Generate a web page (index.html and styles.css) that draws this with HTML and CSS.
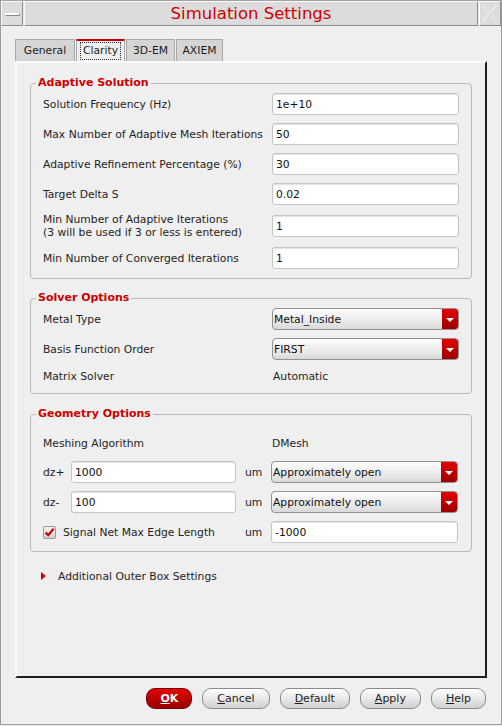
FILE: index.html
```html
<!doctype html>
<html lang="en">
<head>
	<meta charset="utf-8">
	<title>Simulation Settings</title>
	<link rel="stylesheet" href="styles.css">
</head>

<body>
	<div id='window'>
		<div id='titlebar'>
			<div class='tb-btn'><span class='min-bar'></span></div>
			<div id='tb-title'>Simulation Settings</div>
			<div class='tb-btn'>
				<svg width="16" height="18" viewBox="0 0 16 18">
					<path d="M1 1 L15 17 M15 1 L1 17" stroke="#fbfbfb" stroke-width="2"/>
					<path d="M1.5 1.5 L15 17 M15 1.5 L1.5 17" stroke="#c4c4c4" stroke-width="1"/>
				</svg>
			</div>
		</div>

		<div id='tabs'>
			<div class='tab'>General</div>
			<div class='tab active'><span class='focus'>Clarity</span></div>
			<div class='tab'>3D-EM</div>
			<div class='tab'>AXIEM</div>
		</div>

		<div id='panel'>
			<fieldset>
				<legend>Adaptive Solution</legend>
				<div class='rows two-col'>
					<label>Solution Frequency (Hz)</label>
					<input type="text" value="1e+10">
					<label>Max Number of Adaptive Mesh Iterations</label>
					<input type="text" value="50">
					<label>Adaptive Refinement Percentage (%)</label>
					<input type="text" value="30">
					<label>Target Delta S</label>
					<input type="text" value="0.02">
					<label class='two-line'>Min Number of Adaptive Iterations<br>(3 will be used if 3 or less is entered)</label>
					<input type="text" value="1">
					<label>Min Number of Converged Iterations</label>
					<input type="text" value="1">
				</div>
			</fieldset>

			<fieldset>
				<legend>Solver Options</legend>
				<div class='rows two-col'>
					<label>Metal Type</label>
					<div class='combo'><span>Metal_Inside</span><i></i></div>
					<label>Basis Function Order</label>
					<div class='combo'><span>FIRST</span><i></i></div>
					<label class='short'>Matrix Solver</label>
					<div class='short value'>Automatic</div>
				</div>
			</fieldset>

			<fieldset>
				<legend>Geometry Options</legend>
				<div class='rows geo'>
					<label class='wide'>Meshing Algorithm</label>
					<div class='value'>DMesh</div>
					<label>dz+</label>
					<input type="text" value="1000">
					<span class='unit'>um</span>
					<div class='combo'><span>Approximately open</span><i></i></div>
					<label>dz-</label>
					<input type="text" value="100">
					<span class='unit'>um</span>
					<div class='combo'><span>Approximately open</span><i></i></div>
					<label class='check'>
						<svg width="13" height="13" viewBox="0 0 13 13">
							<defs>
								<linearGradient id="cb" x1="0" y1="0" x2="0" y2="1">
									<stop offset="0" stop-color="#f4f4f4"/>
									<stop offset="1" stop-color="#cfcfcf"/>
								</linearGradient>
							</defs>
							<rect x="0.5" y="0.5" width="12" height="12" rx="1.5" fill="url(#cb)" stroke="#9a9a9a"/>
							<path d="M2.6 6.4 L5.2 9.2 L10.6 2.8" fill="none" stroke="#cc0000" stroke-width="2.2"/>
						</svg>
						Signal Net Max Edge Length
					</label>
					<span class='unit'>um</span>
					<input type="text" value="-1000">
				</div>
			</fieldset>

			<div id='outer-box'><span class='arrow'></span>Additional Outer Box Settings</div>
		</div>

		<div id='buttons'>
			<button class='ok'><u>O</u>K</button>
			<button><u>C</u>ancel</button>
			<button><u>D</u>efault</button>
			<button><u>A</u>pply</button>
			<button><u>H</u>elp</button>
		</div>
	</div>
</body>
</html>
```
FILE: styles.css
```css
*{ margin: 0px; padding: 0px; box-sizing: border-box; }
body{
	width: 502px; height: 726px; overflow: hidden;
	background-color: #efefef; color: #1e1e1e;
	font: 10.75px "DejaVu Sans", sans-serif; }

#window{
	height: 725px; display: flex; flex-direction: column;
	border-left: 1px solid #9c9c9c; border-right: 1px solid #9c9c9c;
	border-bottom: 1px solid #9c9c9c; }

/* title bar */
#titlebar{
	display: flex; gap: 1px; height: 26px;
	border-top: 1px solid #a2a2a2; background-color: #ececec; }
.tb-btn, #tb-title{
	background-color: #dcdcdc;
	border: 1px solid; border-color: #fafafa #8e8e8e #8e8e8e #fafafa; }
.tb-btn{
	width: 22px; display: flex; align-items: center; justify-content: center; }
.min-bar{
	width: 15px; height: 3px; margin-top: 2px;
	background-color: #fbfbfb; border: 1px solid; border-color: #fff #8a8a8a #8a8a8a #fff; }
#tb-title{
	flex: 1; text-align: center; color: #cc0000;
	font-size: 16.5px; line-height: 23px; }

/* tabs */
#tabs{
	display: flex; gap: 1px; margin: 13px 0 0 14px; height: 22px; }
.tab{
	height: 22px; padding-top: 4px; text-align: center;
	background-color: #d5d5d5; border: 1px solid #a9a9a9; border-bottom: none; }
.tab:nth-child(1){ width: 60px; }
.tab:nth-child(2){ width: 49px; }
.tab:nth-child(3){ width: 49px; }
.tab:nth-child(4){ width: 47px; }
.tab.active{
	background-color: #efefef; border-top: 2px solid #cc0000; padding-top: 1px; }
.focus{
	display: inline-block; padding: 1px 2px 2px 2px; border: 1px dotted #333; }

#panel{
	width: 472px; height: 617px; margin-left: 14px; padding: 13px 13px 0 13px;
	border: 2px solid; border-color: #fcfcfc #1e1e1e #1e1e1e #fcfcfc; }

/* group boxes */
fieldset{
	width: 442px; border: 1px solid #bababa; border-radius: 4px; }
fieldset + fieldset{ margin-top: 12px; }
fieldset:last-of-type{ margin-top: 13px; }
legend{
	margin-left: 5px; padding: 0 2px; line-height: 14px;
	color: #cc0000; font-weight: bold; font-size: 11px; }

.rows{
	display: grid; row-gap: 8px; padding: 3px 12px 9px 12px;
	align-items: center; }
.two-col{ grid-template-columns: 1fr 187px; }
.two-col .two-line{ line-height: 13px; }
.two-col > *{ min-height: 22px; display: flex; align-items: center; }
.two-col > .short{ min-height: 16px; height: 16px; }
.value{ padding-left: 1px; }

.geo{
	grid-template-columns: 28px 165px 35px 187px;
	grid-template-rows: 20px 22px 22px 22px;
	padding: 12px 12px 8px 12px; }
.geo .wide{ grid-column: span 3; }
.geo .check{ grid-column: span 2; display: flex; align-items: center; gap: 7px; }
.unit{ padding-left: 9px; }

input{
	height: 22px; width: 100%; padding: 0 3px;
	font: 10.75px "DejaVu Sans", sans-serif; color: #111;
	background-color: white; border: 1px solid #c4c4c4; border-radius: 3px;
	box-shadow: inset 0 1px 1px rgba(0,0,0,0.12); }
input:focus{ outline: none; }

.combo{
	height: 22px; display: flex; align-items: center; padding-left: 1px;
	background: linear-gradient(#fdfdfd, #e6e6e6 70%, #d9d9d9);
	border: 1px solid #929292; border-radius: 4px; color: #111; }
.combo span{ flex: 1; }
.combo i{
	position: relative; width: 16px; height: 20px;
	background: linear-gradient(#e40000, #b00000 70%, #9c0000);
	border-radius: 0 3px 3px 0; }
.combo i::after{
	content: ''; position: absolute; left: 4px; top: 9px;
	border-left: 4px solid transparent; border-right: 4px solid transparent;
	border-top: 4px solid #fff; }

#outer-box{
	display: flex; align-items: center; height: 14px;
	margin: 17px 0 0 11px; }
.arrow{
	width: 0; height: 0; margin-right: 12px;
	border-top: 4px solid transparent; border-bottom: 4px solid transparent;
	border-left: 5px solid #cc0000; }

/* dialog buttons */
#buttons{
	display: flex; justify-content: flex-end; gap: 10px;
	margin-top: 10px; padding-right: 15px; }
button{
	height: 21px; padding: 0 14px; border-radius: 9px;
	font: 11px "DejaVu Sans", sans-serif; color: #1e1e1e;
	background: linear-gradient(#fefefe, #e4e4e4 60%, #d0d0d0);
	border: 1px solid #8a8a8a; }
button.ok{
	padding: 0 13px; font-weight: bold; color: white;
	background: linear-gradient(#e60000, #b40000 60%, #9a0000);
	border-color: #7a0000; }
```
